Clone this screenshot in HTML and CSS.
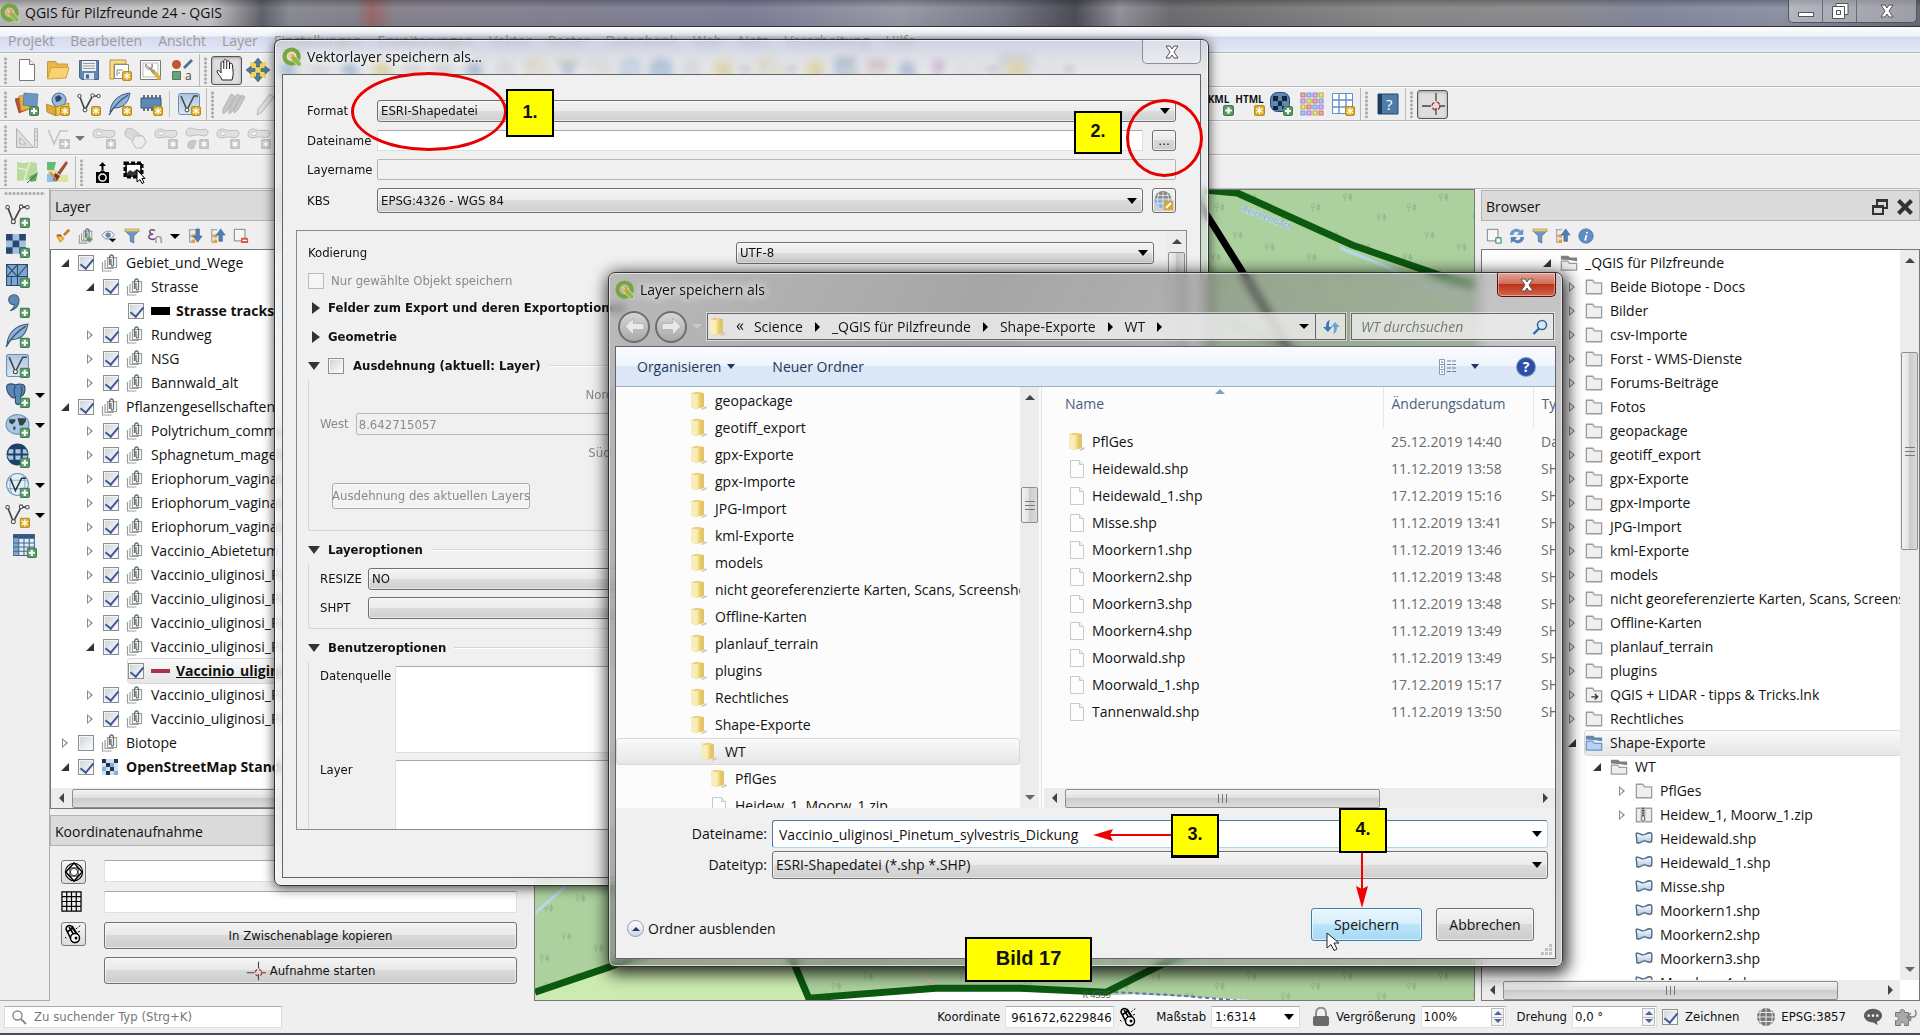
FILE: index.html
```html
<!DOCTYPE html>
<html lang="de">
<head>
  <meta charset="UTF-8">
  <meta name="viewport" content="width=device-width, initial-scale=1.0">
  <title>QGIS für Pilzfreunde 24 - QGIS</title>
  <link rel="stylesheet" href="styles.css">
</head>
<body>

  <!-- icon sprite -->
  <svg class="sprite" aria-hidden="true">
    <defs>
      <linearGradient id="g-fold" x1="0" x2="1"><stop offset="0" stop-color="#fdf3bb"/><stop offset="1" stop-color="#e6c55c"/></linearGradient>
      <linearGradient id="g-shp" x1="0" y1="0" x2="0" y2="1"><stop offset="0" stop-color="#fff"/><stop offset="1" stop-color="#a9c4e2"/></linearGradient>
      <linearGradient id="g-box" x1="0" y1="0" x2="0" y2="1"><stop offset="0" stop-color="#a9c6e4"/><stop offset="1" stop-color="#dce6f0"/></linearGradient>
    </defs>
    <symbol id="plus" viewBox="0 0 10 10"><rect x=".5" y=".5" width="9" height="9" rx="1.5" fill="#5a9b6a" stroke="#3f7d50"/><path d="M5 2v6M2 5h6" stroke="#fff" stroke-width="2"/></symbol>
    <symbol id="star" viewBox="0 0 10 10"><rect x=".5" y=".5" width="9" height="9" rx="1.5" fill="#dcae2c" stroke="#b98e18"/><path d="M5 1.500v7M2 3.200l6 3.600M8 3.200l-6 3.600" stroke="#fff" stroke-width="1.200"/></symbol>
    <symbol id="gbadge" viewBox="0 0 10 10"><rect width="10" height="10" rx="1.500" fill="#c2c2c2"/><path d="M5 1.500v7M2 3.200l6 3.600M8 3.200l-6 3.600" stroke="#fff" stroke-width="1.200"/></symbol>

    <symbol id="logo" viewBox="0 0 24 24"><circle cx="11.500" cy="11.500" r="8.500" fill="none" stroke="#79a63c" stroke-width="5"/><path d="M11 11h5l7 8v4h-4l-8-8z" fill="#8fb94f" stroke="#e9f2dc" stroke-width=".8"/><path d="M8 8l6 1 1 5-5-1z" fill="#f08a2c"/><path d="M8 8l3 .5 2 3-3 1z" fill="#f6d34a"/></symbol>
    <symbol id="new" viewBox="0 0 24 24"><path d="M4.500 1.500h10l5 5v16h-15z" fill="#fff" stroke="#777"/><path d="M14.500 1.500v5h5" fill="#eee" stroke="#777"/></symbol>
    <symbol id="open" viewBox="0 0 24 24"><path d="M1.500 20V3.500h8l2 2.500h10v4" fill="#e8b64c" stroke="#c8963a"/><path d="M1.500 21L5 9.500h18L20 20z" fill="#f9d371" stroke="#d4a53f"/></symbol>
    <symbol id="save" viewBox="0 0 24 24"><path d="M2.500 2.500h19v19h-17l-2-2z" fill="#5f86ad" stroke="#41668c"/><path d="M5 3h14v10H5z" fill="#f1f1f1"/><path d="M6 5.500h12M6 8h12M6 10.500h12" stroke="#9a9a9a"/><path d="M7 15h10v6.500H7z" fill="#dfe6ed"/><path d="M9 16.500h3v4H9z" fill="#41668c"/></symbol>
    <symbol id="layout" viewBox="0 0 24 24"><path d="M2 2h16v4H6v15H2z" fill="#f6dd8a" stroke="#b59334"/><path d="M6.500 6.500h14v14h-14z" fill="#fff" stroke="#888"/><path d="M9 18v-6h6M11 16v-2" stroke="#888" fill="none"/><use href="#star" x="14" y="13" width="10" height="10"/></symbol>
    <symbol id="layoutmgr" viewBox="0 0 24 24"><path d="M1.500 2.500h20v19h-20z" fill="#fff" stroke="#777"/><path d="M4 5h15v14H4z" fill="none" stroke="#bbb"/><path d="M13 12l8 9" stroke="#dfb23c" stroke-width="4"/><path d="M7 6a3.500 3.500 0 1 0 6 0v4h-2l-2-1z" fill="#e4e4e4" stroke="#888"/><path d="M11 10l4 5" stroke="#999" stroke-width="2.500"/></symbol>
    <symbol id="style" viewBox="0 0 24 24"><circle cx="6.500" cy="6.500" r="4.500" fill="#c4542e"/><path d="M14 10l8-8" stroke="#4b7194" stroke-width="2.800"/><path d="M2.500 13.500h8v8h-8z" fill="#69a27c" stroke="#4b7d5c"/><text x="15" y="22" font-family="Open Sans" font-size="12" fill="#444">a</text></symbol>
    <symbol id="hand" viewBox="0 0 24 24"><path d="M7 22c-1-4-5-6-5-9 1-1.500 3 0 4 2V5c0-2 2.500-2 2.800 0V3c0-2 2.700-2 2.900 0v1c.3-2 2.800-1.500 2.800.3V6c.5-1.500 2.800-1 2.800.6C18 13 19 16 17 22z" fill="#fff" stroke="#222"/><path d="M8.800 5v6M11.700 4v7M14.500 5v6" stroke="#222"/></symbol>
    <symbol id="pan" viewBox="0 0 24 24"><path d="M4 4h16v16H4z" fill="#f3d75c"/><path d="M12 0l4 5h-2.500v4h-3V5H8zM12 24l-4-5h2.500v-4h3v4H16zM0 12l5-4v2.500h4v3H5V16zM24 12l-5 4v-2.500h-4v-3h4V8z" fill="#50799f" stroke="#39587a" stroke-width=".6"/></symbol>
    <symbol id="zoomb" viewBox="0 0 24 24"><circle cx="11" cy="12" r="8" fill="#5b84b0"/><path d="M15 17l7 5" stroke="#8a8a8a" stroke-width="3"/></symbol>
    <symbol id="zoomg" viewBox="0 0 24 24"><circle cx="11" cy="12" r="7" fill="#dadada" stroke="#9a9a9a" stroke-width="2"/><path d="M15 17l6 5" stroke="#9a9a9a" stroke-width="3"/></symbol>
    <symbol id="selecty" viewBox="0 0 24 24"><path d="M3 4h18v16H3z" fill="#e6c94a"/><path d="M12 8l8 12" stroke="#999" stroke-width="3"/></symbol>
    <symbol id="redtab" viewBox="0 0 24 24"><path d="M3 4h18v16H3z" fill="#e8e8e8" stroke="#a7a7a7" stroke-width="2"/><path d="M3 4h18v6H3z" fill="#c96a60"/><path d="M3 16h18v4H3z" fill="#9ac29d"/></symbol>
    <symbol id="sigma" viewBox="0 0 24 24"><path d="M5 4h14l-6 8v8h-4v-8z" fill="#9b3fa0"/></symbol>

    <symbol id="datasrc" viewBox="0 0 24 24"><path d="M0 7l10-3 4 13-10 4z" fill="#b5532e" stroke="#8a3b1c" stroke-width=".6"/><path d="M4 4l11-2 2 14-11 3z" fill="#e6b23e" stroke="#b7872a" stroke-width=".6"/><path d="M9 1l14 1-1 13-14-2z" fill="#6d96c4" stroke="#466c98" stroke-width=".6"/><use href="#plus" x="14" y="14" width="10" height="10"/></symbol>
    <symbol id="gpkg" viewBox="0 0 24 24"><circle cx="13" cy="8" r="7" fill="#9bbbdb" stroke="#41668c"/><path d="M9 5l4-2 3 3-2 3-4 1z" fill="#2c4a6c"/><path d="M0 12l10 3v9L1 20z" fill="#dda931" stroke="#8c6b18" stroke-width=".6"/><path d="M10 15l13-4-1 9-12 4z" fill="#f1c84b" stroke="#8c6b18" stroke-width=".6"/><use href="#star" x="14" y="14" width="10" height="10"/></symbol>
    <symbol id="vec" viewBox="0 0 24 24"><path d="M2.500 4l5.500 14L15.500 4h6" fill="none" stroke="#444" stroke-width="1.600"/><g fill="#fff" stroke="#444"><circle cx="2.500" cy="4" r="1.700"/><circle cx="8" cy="18" r="1.900"/><circle cx="15.500" cy="3.500" r="1.700"/><circle cx="21.500" cy="4" r="1.700"/></g></symbol>
    <symbol id="vec-add" viewBox="0 0 24 24"><use href="#vec"/><use href="#plus" x="14" y="14" width="10" height="10"/></symbol>
    <symbol id="vec-new" viewBox="0 0 24 24"><use href="#vec"/><use href="#star" x="14" y="14" width="10" height="10"/></symbol>
    <symbol id="feather" viewBox="0 0 24 24"><path d="M2 20C3 10 10 2 22 1c-1 6-3 12-10 14-3 1-5 1-6 1z" fill="#8fb4d8" stroke="#39587a"/><path d="M1 23C6 14 12 8 20 3" fill="none" stroke="#39587a" stroke-width="1.400"/></symbol>
    <symbol id="feather-add" viewBox="0 0 24 24"><use href="#feather"/><use href="#plus" x="14" y="14" width="10" height="10"/></symbol>
    <symbol id="feather-new" viewBox="0 0 24 24"><use href="#feather"/><use href="#star" x="14" y="14" width="10" height="10"/></symbol>
    <symbol id="chip" viewBox="0 0 24 24"><path d="M5 3v16M9 3v16M13 3v16M17 3v16M21 3v16" stroke="#444" stroke-width="1.500"/><path d="M2 6h20v10H2z" fill="#5d88b5" stroke="#39587a"/><use href="#star" x="14" y="14" width="10" height="10"/></symbol>
    <symbol id="virt" viewBox="0 0 24 24"><rect x="1.500" y="1.500" width="21" height="21" rx="2" fill="url(#g-box)" stroke="#6e8eb0"/><path d="M4 4l6 14 7-14h4" fill="none" stroke="#444" stroke-width="1.500"/><circle cx="10" cy="18" r="1.900" fill="#fff" stroke="#444"/></symbol>
    <symbol id="virt-new" viewBox="0 0 24 24"><use href="#virt"/><use href="#star" x="14" y="14" width="10" height="10"/></symbol>
    <symbol id="virt-add" viewBox="0 0 24 24"><use href="#virt"/><use href="#plus" x="14" y="14" width="10" height="10"/></symbol>
    <symbol id="pencils" viewBox="0 0 24 24"><path d="M9 2l4 2-8 15-4 3v-5zM15 2l4 2-8 15-4 3v-5zM20 3l3 2-7 13-4 3v-4z" fill="#c6c6c6" stroke="#aeaeae" stroke-width=".8"/></symbol>
    <symbol id="pencil" viewBox="0 0 24 24"><path d="M17 2l4 3L9 20l-5 3 1-6z" fill="#dedede" stroke="#b5b5b5"/></symbol>
    <symbol id="ruler" viewBox="0 0 24 24"><path d="M1.500 2.500v19h17zM5 12l6 6H5z" fill="#dedede" stroke="#b0b0b0"/><path d="M19.500 2.500h3v19h-3zM20 6h2M20 10h2M20 14h2" fill="#e4e4e4" stroke="#b8b8b8"/></symbol>
    <symbol id="vtx" viewBox="0 0 24 24"><path d="M2.500 4l5.500 14L14 5h8" fill="none" stroke="#c2c2c2" stroke-width="1.600"/><path d="M13 13h11v10H13z" fill="#c6c6c6"/><path d="M15 18h6m-2.500-3l3 3-3 3" stroke="#fff" fill="none" stroke-width="1.600"/></symbol>
    <symbol id="blob" viewBox="0 0 24 24"><path d="M1 8c0-5 5-6 9-4s13-2 13 3-5 5-9 4-13 4-13-3z" fill="#e0e0e0" stroke="#bdbdbd"/><ellipse cx="7" cy="7.500" rx="3" ry="2" fill="#f5f5f5" stroke="#c6c6c6"/><use href="#gbadge" x="14" y="13" width="10" height="10"/></symbol>
    <symbol id="blob2" viewBox="0 0 24 24"><path d="M2 7c0-5 6-6 9-3s11 7 11 13c-6 8-11-2-15-4s-5-3-5-6z" fill="#dadada" stroke="#bdbdbd"/><path d="M12 10h8l3 6-4 6h-6l-4-6z" fill="#ececec" stroke="#bdbdbd"/></symbol>
    <symbol id="blob3" viewBox="0 0 24 24"><path d="M1 7c0-5 5-6 9-4s13-2 13 3-5 4-9 3-13 4-13-2z" fill="#e0e0e0" stroke="#bdbdbd"/><path d="M2 19c1-6 8-6 10-4l-3 8c-3 1-7 0-7-4z" fill="#c8c8c8"/><use href="#gbadge" x="14" y="13" width="10" height="10"/></symbol>
    <symbol id="osm" viewBox="0 0 24 24"><path d="M2 2l7 1 7-1 6 1v8l-1 10-8-1-11 1V11z" fill="#b9dba0"/><path d="M3 8l9 2 3-8M12 10l-3 12" stroke="#e7efd0" stroke-width="1.500" fill="none"/><path d="M14 17l9-5-2 9-5 1z" fill="#6aa85e"/><path d="M12 23l9-8" stroke="#2e6b2e"/></symbol>
    <symbol id="osm2" viewBox="0 0 24 24"><path d="M1 2h9l-2 8H1z" fill="#5fbf7a"/><path d="M2 10h9v5H2z" fill="#e9d9a0"/><path d="M1 14h11v8H1z" fill="#8ec0e8"/><path d="M10 15h12v7H10z" fill="#e2dfa0"/><path d="M20 1l2 2-8 12-3-2z" fill="#a35136"/><path d="M9 13l5 3-3 5-4-1z" fill="#6a3a26"/><path d="M4 12l6 8" stroke="#e08a3c" stroke-width="2"/></symbol>
    <symbol id="camera" viewBox="0 0 24 24"><path d="M11.500 2L15 6h-2.500v4h-2V6H8z" fill="#000"/><path d="M5 12h4l1-1.500h3l1 1.500h4v11H5z" fill="#000"/><circle cx="11.500" cy="17.500" r="3.600" fill="none" stroke="#fff" stroke-width="1.500"/></symbol>
    <symbol id="snap" viewBox="0 0 24 24"><path d="M3 3h17v14H3z" fill="#333" stroke="#000" stroke-width="3" stroke-dasharray="4 2"/><path d="M5 5h13v6l-3-2-4 3-3-2-3 3z" fill="#fff"/><path d="M15 10v12l3-2.500 2 4 2-1-2-4h3z" fill="#fff" stroke="#000"/></symbol>
    <symbol id="rast-add" viewBox="0 0 24 24"><path d="M1 1h19v19H1z" fill="#9fc0df"/><path d="M1 1h6.300v6.300H1zM13.700 1H20v6.300h-6.300zM7.300 7.300h6.400v6.400H7.300zM1 13.700h6.300V20H1zM13.700 13.700H20V20h-6.300z" fill="#27486c"/><use href="#plus" x="14" y="14" width="10" height="10"/></symbol>
    <symbol id="rast" viewBox="0 0 18 18"><path d="M1 1h16v16H1z" fill="#cfe0f3"/><path d="M1 1h4v4H1zM13 1h4v4h-4zM5 5h4v4H5zM9 9h4v4H9zM5 13h4v4H5z" fill="#24354b"/><path d="M9 5h4v4H9zM1 9h4v4H1zM13 13h4v4h-4z" fill="#89aed8"/></symbol>
    <symbol id="mesh-add" viewBox="0 0 24 24"><path d="M1.500 1.500h20v20h-20z" fill="#7fa6cf" stroke="#27486c"/><path d="M1.500 13h20M12 1.500v20M1.500 1.500L12 13M12 1.500L1.500 13M21.500 1.500L12 13M6 13v9" stroke="#27486c" fill="none"/><use href="#plus" x="14" y="14" width="10" height="10"/></symbol>
    <symbol id="comma-add" viewBox="0 0 24 24"><path d="M5 3c5-3 10 0 8 7-1 4-4 6-8 7 3-2 4-4 4-6-5 1-7-5-4-8z" fill="#5d88b5" stroke="#39587a"/><use href="#plus" x="14" y="14" width="10" height="10"/></symbol>
    <symbol id="pg-add" viewBox="0 0 24 24"><path d="M2 2c3-2 6-1 8 0 4-2 9-1 9 2 1 5-2 9-4 9v5c0 4-5 3-5 0v-4c-2 1-4 0-5-2-3-2-4-8-3-10z" fill="#5d88b5" stroke="#27486c"/><path d="M10 3c-2 3-1 8 0 11M15 3c2 3 1 7 0 9" stroke="#27486c" fill="none"/><use href="#plus" x="14" y="14" width="10" height="10"/></symbol>
    <symbol id="dots-add" viewBox="0 0 24 24"><ellipse cx="12" cy="11" rx="11" ry="9.500" fill="#a9c6e6" stroke="#6b93bd"/><path d="M4 6h6v2l-3 3-3-2zM12 5h8v3l-3 4h-3zM8 13h2v3H8z" fill="#344"/><use href="#plus" x="14" y="14" width="10" height="10"/></symbol>
    <symbol id="globe-add" viewBox="0 0 24 24"><circle cx="12" cy="11" r="10.500" fill="#1e3f66"/><path d="M4 6h4v4H3zM10 6h5v4h-5zM17 6h3l2 4h-5zM2 12h6v4H4zM10 12h5v4h-5zM17 12h5l-2 4h-3z" fill="#a9c6e6"/><use href="#plus" x="14" y="14" width="10" height="10"/></symbol>
    <symbol id="wfs-add" viewBox="0 0 24 24"><circle cx="12" cy="11" r="10.500" fill="#e4eef9" stroke="#6b93bd"/><path d="M2 7h20M2 15h20M7 1c-3 6-3 14 0 20M17 1c3 6 3 14 0 20" stroke="#8fb2d6" fill="none"/><path d="M5 5l5 12 6-12h4" fill="none" stroke="#333" stroke-width="1.500"/><use href="#plus" x="14" y="14" width="10" height="10"/></symbol>
    <symbol id="table-add" viewBox="0 0 24 24"><path d="M1.500 1.500h20v20h-20z" fill="#e4eef9" stroke="#41668c"/><path d="M1.500 1.500h20v4h-20z" fill="#2f557f"/><path d="M1.500 5h5v16h-5z" fill="#7fa6cf"/><path d="M6.500 2v20M11.500 2v20M16.500 2v20M1.500 9.500h20M1.500 13.500h20M1.500 17.500h20" stroke="#41668c"/><use href="#plus" x="14" y="14" width="10" height="10"/></symbol>
    <symbol id="rastglobe" viewBox="0 0 24 24"><rect x="1.500" y=".5" width="19" height="19" rx="7" fill="#5d88b5" stroke="#27486c"/><path d="M4 4h5v5H4zM13 4h5v5h-5zM9 9h4v5H9zM4 14h5v4H4zM13 14h5v3h-5z" fill="#16263a"/><use href="#plus" x="14" y="14" width="10" height="10"/></symbol>
    <symbol id="colgrid" viewBox="0 0 24 24"><g stroke-width="1.200"><path d="M1 1h4v4H1zM13 7h4v4h-4zM7 13h4v4H7zM19 19h4v4h-4z" fill="#e3b0b0" stroke="#c77"/><path d="M7 1h4v4H7zM19 7h4v4h-4zM13 13h4v4h-4zM1 19h4v4H1z" fill="#b0c7ee" stroke="#77a0dd"/><path d="M13 1h4v4h-4zM1 7h4v4H1zM19 13h4v4h-4zM7 19h4v4H7z" fill="#d5b8ea" stroke="#a77fd0"/><path d="M19 1h4v4h-4zM7 7h4v4H7zM1 13h4v4H1zM13 19h4v4h-4z" fill="#f2e2a0" stroke="#c2a93c"/></g></symbol>
    <symbol id="bluegrid" viewBox="0 0 24 24"><path d="M1.500 1.500h20v20h-20z" fill="#fff" stroke="#5f92cc"/><path d="M8 2v20M15 2v20M2 8h20M2 15h20" stroke="#5f92cc" stroke-width="1.400"/><use href="#star" x="14" y="14" width="10" height="10"/></symbol>
    <symbol id="help" viewBox="0 0 24 24"><path d="M2 2h20v20H2z" fill="#4f7ba8" stroke="#27486c"/><path d="M2 2h4v20H2z" fill="#1f3c5c"/><text x="10" y="18" font-family="Open Sans" font-size="15" fill="#fff">?</text></symbol>
    <symbol id="cross" viewBox="0 0 24 24"><path d="M15 1v8M15 16v7M1 14h9M18 14h6" stroke="#444" stroke-width="1.300"/><circle cx="15" cy="14" r="4" fill="none" stroke="#b33" stroke-width="1.500" stroke-dasharray="4 2.300"/></symbol>
    <symbol id="brush" viewBox="0 0 18 18"><path d="M10 8l6-6" stroke="#c57a2c" stroke-width="3"/><path d="M2 9l4-2 4 5-4 4z" fill="#f2c14c" stroke="#b98e18"/><path d="M2 8l5 1" stroke="#c44" stroke-width="2"/></symbol>
    <symbol id="clip" viewBox="0 0 18 18"><path d="M6.500 3.500h9v10h-9zM1.500 8v9h9M4 6v8.500h9" fill="none" stroke="#9a9f9a" stroke-width="1.200"/><path d="M8.500 11V4c0-4 4-4 4 0v6c0 3-2.500 2.500-2.500 0V5" fill="none" stroke="#66727c" stroke-width="1.300"/></symbol>
    <symbol id="clip-add" viewBox="0 0 18 18"><use href="#clip"/><path d="M13 10v6M10 13h6" stroke="#4f9a48" stroke-width="2"/></symbol>
    <symbol id="eye" viewBox="0 0 18 18"><path d="M1 8c4-6 11-6 14 0-4 6-11 6-14 0z" fill="#eef2f6" stroke="#7d8891"/><circle cx="8" cy="8" r="3" fill="#5d88b5"/><path d="M9 12h8l-4 4z" fill="#000"/></symbol>
    <symbol id="funnel" viewBox="0 0 18 18"><path d="M1 3h16l-6 6v8l-4-2V9z" fill="#6c98c8" stroke="#41668c" stroke-width=".8"/><path d="M1 1h16v3H1z" fill="#e2c878" stroke="#b59a4a" stroke-width=".6"/></symbol>
    <symbol id="eps" viewBox="0 0 18 18"><path d="M9 3C6 1 3 2 3 4s2 3 4 3C4 7 2 8 2 10s4 4 7 2" fill="none" stroke="#7a4a86" stroke-width="1.800"/><path d="M10 17v-5c0-3 6-3 6 0v5" fill="none" stroke="#aaa" stroke-width="2"/></symbol>
    <symbol id="expand" viewBox="0 0 18 18"><path d="M2 2h7M3 2v14h4M3 9h4" stroke="#888" fill="none"/><path d="M5 7h4v4H5zM5 13h4v4H5z" fill="#e6a13c"/><path d="M10 1h4v8h3l-5 7-5-7h3z" fill="#4f7fb5" stroke="#2f557f" stroke-width=".6"/></symbol>
    <symbol id="collapse" viewBox="0 0 18 18"><path d="M1 2h7M2 2v14h4M2 9h4" stroke="#888" fill="none"/><path d="M4 7h4v4H4zM4 13h4v4H4z" fill="#e6a13c"/><path d="M10 15h4V8h3l-5-7-5 7h3z" fill="#4f7fb5" stroke="#2f557f" stroke-width=".6"/></symbol>
    <symbol id="remove" viewBox="0 0 18 18"><path d="M1.500 1.500h12v13h-12z" fill="#f6f6f6" stroke="#777"/><rect x="9" y="11" width="8" height="6" rx="1" fill="#d9534f"/><path d="M10.500 14h5" stroke="#fff" stroke-width="1.500"/></symbol>
    <symbol id="addlay" viewBox="0 0 18 18"><path d="M1.500 1.500h12v13h-12z" fill="#f6f6f6" stroke="#777"/><rect x="11" y="11" width="6" height="6" rx="1" fill="#fff" stroke="#4f9a68" stroke-width="1.500"/></symbol>
    <symbol id="refresh" viewBox="0 0 18 18"><path d="M1 8c0-7 9-9 12-5l3-2v7H9l2-3c-3-2-6 0-6 3z" fill="#6c98d0"/><path d="M17 10c0 7-9 9-12 5l-3 2v-7h7l-2 3c3 2 6 0 6-3z" fill="#5585c0"/></symbol>
    <symbol id="info" viewBox="0 0 18 18"><circle cx="9" cy="9" r="8" fill="#5f8fc6" stroke="#47729f"/><path d="M10 4.500v1.800M9.500 8l-1.500 6" stroke="#fff" stroke-width="2"/></symbol>
    <symbol id="fold" viewBox="0 0 20 18"><path d="M1.500 16.500v-15h7l2 3h8v12z" fill="#efefef" stroke="#9c9c9c" stroke-width="1.400"/></symbol>
    <symbol id="fold-open" viewBox="0 0 20 18"><path d="M1 5V1h8l2 2h8v4l-7-1z" fill="#7f7f7f"/><path d="M1.500 17V7h7l2 2.500h8V17z" fill="#efefef" stroke="#9c9c9c" stroke-width="1.400"/></symbol>
    <symbol id="fold-sel" viewBox="0 0 20 18"><path d="M1 5V1h8l2 2h8v4l-7-1z" fill="#6488ae"/><path d="M1.500 17V7h7l2 2.500h8V17z" fill="#b5d3f5" stroke="#6f94bd" stroke-width="1.400"/></symbol>
    <symbol id="fold-link" viewBox="0 0 20 18"><use href="#fold"/><path d="M7 11h7m-3-3l3 3-3 3" fill="none" stroke="#333" stroke-width="1.500"/></symbol>
    <symbol id="zip" viewBox="0 0 20 18"><path d="M1.500 1.500h17v15h-17z" fill="#ededed" stroke="#9c9c9c" stroke-width="1.400"/><path d="M6 1h6v16H6z" fill="#c9c9c9"/><path d="M9 1v9" stroke="#555" stroke-width="3" stroke-dasharray="1.500 1"/><rect x="7.500" y="10" width="3" height="6" rx="1.500" fill="#fff" stroke="#555"/></symbol>
    <symbol id="shp" viewBox="0 0 20 18"><path d="M1.500 2.500C6 2 7 6 11 4s6-3 7.500-1c1 4-.5 6 0 9-4 2-5-1-8-1s-5 4-8.500 2C3 9 .5 6 1.500 2.500z" fill="url(#g-shp)" stroke="#4a6684" stroke-width="1.500"/></symbol>
    <symbol id="wfold" viewBox="0 0 18 20"><path d="M1 2l6-1 7 1v14l-8 2-5-2z" fill="#e3c46a"/><path d="M1 2l5 1v15l-5-2z" fill="#f7edbd"/><path d="M6 3l5-2v15l-5 2z" fill="url(#g-fold)"/><path d="M11 18l5-3 1 2-5 2z" fill="#cfc9b4"/></symbol>
    <symbol id="file" viewBox="0 0 18 20"><path d="M2.500 1.500h9l4 4v13h-13z" fill="#fdfdfd" stroke="#c9c9c9"/><path d="M11.500 1.500v4h4" fill="#eee" stroke="#c9c9c9"/></symbol>
    <symbol id="globe-wire" viewBox="0 0 20 20"><circle cx="10" cy="10" r="9" fill="#777"/><path d="M1 10h18M2.500 5.500h15M2.500 14.500h15M10 1v18M6 1.500c-3 5-3 12 0 17M14 1.500c3 5 3 12 0 17" stroke="#e6e6e6" fill="none"/></symbol>
    <symbol id="globe-edit" viewBox="0 0 20 20"><circle cx="9" cy="9" r="8.500" fill="#8fb2d6"/><path d="M1 8a8 8 0 0 1 16 0z" fill="#888"/><path d="M1 8h16M3 4.500h12M2 12.500h14M9 1v16M5 2c-2 5-2 10 0 14M13 2c2 5 2 10 0 14" stroke="#eee" fill="none" stroke-width=".8"/><path d="M10 10h9v9h-9z" fill="#d6a92c"/><path d="M12 17l5-5" stroke="#fff" stroke-width="1.800"/></symbol>
    <symbol id="crs" viewBox="0 0 22 22"><circle cx="11" cy="11" r="9.500" fill="none" stroke="#000" stroke-width="1.200"/><path d="M11 1l9 10-9 10-9-10z" fill="#fff" stroke="#000" stroke-width="1.600"/><path d="M6.500 6.500h9v9h-9z" fill="none" stroke="#000"/><circle cx="11" cy="11" r="4" fill="none" stroke="#333"/></symbol>
    <symbol id="gridb" viewBox="0 0 22 22"><path d="M1 1h20v20H1zM6 1v20M11 1v20M16 1v20M1 6h20M1 11h20M1 16h20" fill="none" stroke="#000" stroke-width="1.300"/></symbol>
    <symbol id="mouse" viewBox="0 0 20 20"><path d="M2 5c0-3 4-5 6-2l6 9c3 5-3 8-6 5z" fill="#fff" stroke="#000" stroke-width="1.600"/><path d="M5 3l5 8M9 4l-6 4M8 2l5 8" stroke="#000" stroke-width="1.600"/><circle cx="11" cy="14" r="4.500" fill="#fff" stroke="#000" stroke-width="1.500"/><circle cx="12" cy="14" r="1.500"/><path d="M12 5l5-4M1 13l2 2M14 8l3-1" stroke="#000" stroke-dasharray="2 1.500"/></symbol>
    <symbol id="lock" viewBox="0 0 18 20"><path d="M4 10V6c0-7 10-7 10 0v4" fill="none" stroke="#8f8f8f" stroke-width="2"/><rect x="1" y="9" width="16" height="10" rx="2" fill="#6a6a6a"/></symbol>
    <symbol id="bubble" viewBox="0 0 22 20"><ellipse cx="11" cy="8.500" rx="10" ry="7.500" fill="#5c5c5c"/><path d="M9 14h6l1 5z" fill="#5c5c5c"/><path d="M5 8.500h2.500M9.700 8.500h2.600M14.500 8.500H17" stroke="#fff" stroke-width="2.500"/></symbol>
    <symbol id="puzzle" viewBox="0 0 24 20"><path d="M1.500 5.500h5c-2-4 5-4 4 0h4v4c3-2 4 4 0 4v5h-4c1-4-5-4-4 0h-5v-5c4 1 4-5 0-4z" fill="#a9a9a9" stroke="#777"/><path d="M14 10h5c3 0 4-4 2-7M17 6l-4 4 4 4" fill="none" stroke="#888" stroke-width="1.500"/></symbol>
    <symbol id="lens" viewBox="0 0 16 16"><circle cx="6.500" cy="6.500" r="4.500" fill="none" stroke="#888" stroke-width="1.400"/><path d="M10 10l5 5" stroke="#888" stroke-width="2"/></symbol>
    <symbol id="lens-b" viewBox="0 0 16 16"><circle cx="10" cy="6" r="4.500" fill="none" stroke="#2d6db0" stroke-width="1.600"/><path d="M7 9.500L1.500 15" stroke="#2d6db0" stroke-width="2.400"/></symbol>
    <symbol id="views" viewBox="0 0 20 18"><path d="M1.500 1.500h5v15h-5zM1 6.500h6M1 11.500h6" fill="#fff" stroke="#8a9bae"/><path d="M3 4h2M3 9h2M3 14h2" stroke="#4b7194"/><path d="M9 3h10M9 6.500h10M9 10h10M9 13.500h10" stroke="#6c7f94" stroke-dasharray="4 1"/></symbol>
    <symbol id="swap" viewBox="0 0 18 16"><path d="M8 1C4 2 4 6 4 8H1l5 5 4-5H7c0-3 0-5 1-7z" fill="#3c77bb"/><path d="M11 15c4-1 4-5 4-7h3l-5-5-4 5h3c0 3 0 5-1 7z" fill="#6fa3d8"/></symbol>
    <symbol id="xglyph" viewBox="0 0 16 16"><path d="M2 2h4l2 3 2-3h4l-4 6 4 6h-4l-2-3-2 3H2l4-6z" fill="#fff" stroke="#555"/></symbol>
    <symbol id="tree" viewBox="0 0 12 12"><circle cx="3" cy="4" r="2" fill="none" stroke="#8fb583"/><path d="M3 6v4M9 10V2M9 2L7 7h4z" fill="none" stroke="#8fb583"/></symbol>
  </svg>

  <header class="titlebar">
    <svg class="ico20"><use href="#logo"/></svg>
    <span>QGIS für Pilzfreunde 24 - QGIS</span>
    <div class="winbtns">
      <button type="button" aria-label="Minimieren"><svg width="18" height="14" viewBox="0 0 18 14"><rect x="1.500" y="8.500" width="15" height="4" fill="#fff" stroke="#555"/></svg></button>
      <button type="button" aria-label="Wiederherstellen"><svg width="18" height="18" viewBox="0 0 18 18"><path d="M5 1.500h12v11H5z" fill="#fff" stroke="#555"/><path d="M1.500 4.500h12v12h-12zM5.500 8.500h4v4h-4z" fill="#fff" fill-rule="evenodd" stroke="#555"/></svg></button>
      <button type="button" class="wide" aria-label="Schließen"><svg width="16" height="16"><use href="#xglyph"/></svg></button>
    </div>
  </header>

  <nav class="menubar">
    <span>Projekt</span><span>Bearbeiten</span><span>Ansicht</span><span>Layer</span><span>Einstellungen</span><span>Erweiterungen</span><span>Vektor</span><span>Raster</span><span>Datenbank</span><span>Web</span><span>Netz</span><span>Verarbeitung</span><span>Hilfe</span>
  </nav>

  <div class="toolbar">
    <div class="group">
      <i class="grip"></i>
      <button type="button"><svg><use href="#new"/></svg></button>
      <button type="button"><svg><use href="#open"/></svg></button>
      <button type="button"><svg><use href="#save"/></svg></button>
      <button type="button"><svg><use href="#layout"/></svg></button>
      <button type="button"><svg><use href="#layoutmgr"/></svg></button>
      <button type="button"><svg><use href="#style"/></svg></button>
    </div>
    <div class="group last">
      <i class="grip"></i>
      <button type="button" class="pressed"><svg><use href="#hand"/></svg></button>
      <button type="button"><svg><use href="#pan"/></svg></button>
      <button type="button"><svg><use href="#zoomb"/></svg></button>
      <button type="button"><svg><use href="#zoomg"/></svg></button>
      <button type="button"><svg><use href="#zoomb"/></svg></button>
      <button type="button"><svg><use href="#selecty"/></svg></button>
      <button type="button"><svg><use href="#zoomg"/></svg></button>
      <button type="button"><svg><use href="#zoomg"/></svg></button>
      <button type="button"><svg><use href="#zoomb"/></svg></button>
      <button type="button"><svg><use href="#zoomg"/></svg></button>
      <button type="button"><svg><use href="#layout"/></svg></button>
      <button type="button"><svg><use href="#funnel"/></svg></button>
      <button type="button"><svg><use href="#layoutmgr"/></svg></button>
      <button type="button"><svg><use href="#refresh"/></svg></button>
      <button type="button"><svg><use href="#info"/></svg></button>
      <button type="button"><svg><use href="#zoomg"/></svg></button>
      <button type="button"><svg><use href="#selecty"/></svg></button>
      <i class="dd"></i>
      <button type="button"><svg><use href="#layout"/></svg></button>
      <i class="dd"></i>
      <button type="button"><svg><use href="#selecty"/></svg></button>
      <button type="button"><svg><use href="#table-add"/></svg></button>
      <button type="button"><svg><use href="#redtab"/></svg></button>
      <button type="button"><svg><use href="#zoomb"/></svg></button>
      <button type="button"><svg><use href="#sigma"/></svg></button>
      <button type="button"><svg><use href="#ruler"/></svg></button>
      <i class="dd"></i>
      <button type="button" class="pressed"><svg><use href="#selecty"/></svg></button>
      <button type="button"><svg><use href="#vtx"/></svg></button>
      <i class="dd"></i>
    </div>
  </div>

  <div class="toolbar">
    <div class="group">
      <i class="grip"></i>
      <button type="button"><svg><use href="#datasrc"/></svg></button>
      <button type="button"><svg><use href="#gpkg"/></svg></button>
      <button type="button"><svg><use href="#vec-new"/></svg></button>
      <button type="button"><svg><use href="#feather-new"/></svg></button>
      <button type="button"><svg><use href="#chip"/></svg></button>
      <i class="vsep"></i>
      <button type="button"><svg><use href="#virt-new"/></svg></button>
    </div>
    <div class="group">
      <i class="grip"></i>
      <button type="button"><svg><use href="#pencils"/></svg></button>
      <button type="button"><svg><use href="#pencil"/></svg></button>
      <span class="filler"></span>
      <button type="button" class="word"><b>KML</b><svg><use href="#plus"/></svg></button>
      <button type="button" class="word"><b>HTML</b><svg><use href="#star"/></svg></button>
      <button type="button"><svg><use href="#rastglobe"/></svg></button>
      <button type="button"><svg><use href="#colgrid"/></svg></button>
      <button type="button"><svg><use href="#bluegrid"/></svg></button>
    </div>
    <div class="group">
      <i class="grip"></i>
      <button type="button"><svg><use href="#help"/></svg></button>
    </div>
    <div class="group last">
      <i class="grip"></i>
      <button type="button" class="pressed"><svg><use href="#cross"/></svg></button>
    </div>
  </div>

  <div class="toolbar">
    <div class="group last">
      <i class="grip"></i>
      <button type="button"><svg><use href="#ruler"/></svg></button>
      <button type="button"><svg><use href="#vtx"/></svg></button>
      <i class="dd gray"></i>
      <button type="button"><svg><use href="#blob"/></svg></button>
      <button type="button"><svg><use href="#blob2"/></svg></button>
      <button type="button"><svg><use href="#blob"/></svg></button>
      <button type="button"><svg><use href="#blob3"/></svg></button>
      <button type="button"><svg><use href="#blob"/></svg></button>
      <button type="button"><svg><use href="#blob"/></svg></button>
    </div>
  </div>

  <div class="toolbar">
    <div class="group">
      <i class="grip"></i>
      <button type="button"><svg><use href="#osm"/></svg></button>
      <button type="button"><svg><use href="#osm2"/></svg></button>
    </div>
    <div class="group last">
      <i class="grip"></i>
      <button type="button"><svg><use href="#camera"/></svg></button>
      <button type="button"><svg><use href="#snap"/></svg></button>
    </div>
  </div>

  <main class="workspace">

    <aside class="sidebar">
      <i class="hgrip"></i>
      <div class="side-item"><svg><use href="#vec-add"/></svg></div>
      <div class="side-item"><svg><use href="#rast-add"/></svg></div>
      <div class="side-item"><svg><use href="#mesh-add"/></svg></div>
      <div class="side-item"><svg><use href="#comma-add"/></svg></div>
      <div class="side-item"><svg><use href="#feather-add"/></svg></div>
      <div class="side-item"><svg><use href="#virt-add"/></svg></div>
      <div class="side-item"><svg><use href="#pg-add"/></svg><i class="dd"></i></div>
      <div class="side-item"><svg><use href="#dots-add"/></svg><i class="dd"></i></div>
      <div class="side-item"><svg><use href="#globe-add"/></svg></div>
      <div class="side-item"><svg><use href="#wfs-add"/></svg><i class="dd"></i></div>
      <div class="side-item"><svg><use href="#vec-new"/></svg><i class="dd"></i></div>
      <div class="side-item mid"><svg><use href="#table-add"/></svg></div>
    </aside>

    <section class="dock dock-left">
      <h2>Layer</h2>
      <div class="minibar">
        <svg><use href="#brush"/></svg><svg><use href="#clip-add"/></svg><svg><use href="#eye"/></svg><svg><use href="#funnel"/></svg><svg><use href="#eps"/></svg><i class="dd"></i><svg><use href="#expand"/></svg><svg><use href="#collapse"/></svg><svg><use href="#remove"/></svg>
      </div>
      <div class="treebox">
        <ul class="tree">
          <li class="l0"><i class="tw open"></i><label><input type="checkbox" checked><svg><use href="#clip"/></svg>Gebiet_und_Wege</label></li>
          <li class="l1"><i class="tw open"></i><label><input type="checkbox" checked><svg><use href="#clip"/></svg>Strasse</label></li>
          <li class="l2"><i class="tw none"></i><label><input type="checkbox" checked><i class="swatch black"></i><b>Strasse tracks</b></label></li>
          <li class="l1"><i class="tw"></i><label><input type="checkbox" checked><svg><use href="#clip"/></svg>Rundweg</label></li>
          <li class="l1"><i class="tw"></i><label><input type="checkbox" checked><svg><use href="#clip"/></svg>NSG</label></li>
          <li class="l1"><i class="tw"></i><label><input type="checkbox" checked><svg><use href="#clip"/></svg>Bannwald_alt</label></li>
          <li class="l0"><i class="tw open"></i><label><input type="checkbox" checked><svg><use href="#clip"/></svg>Pflanzengesellschaften</label></li>
          <li class="l1"><i class="tw"></i><label><input type="checkbox" checked><svg><use href="#clip"/></svg>Polytrichum_commune</label></li>
          <li class="l1"><i class="tw"></i><label><input type="checkbox" checked><svg><use href="#clip"/></svg>Sphagnetum_magellanici</label></li>
          <li class="l1"><i class="tw"></i><label><input type="checkbox" checked><svg><use href="#clip"/></svg>Eriophorum_vaginatum</label></li>
          <li class="l1"><i class="tw"></i><label><input type="checkbox" checked><svg><use href="#clip"/></svg>Eriophorum_vaginatum</label></li>
          <li class="l1"><i class="tw"></i><label><input type="checkbox" checked><svg><use href="#clip"/></svg>Eriophorum_vaginatum</label></li>
          <li class="l1"><i class="tw"></i><label><input type="checkbox" checked><svg><use href="#clip"/></svg>Vaccinio_Abietetum</label></li>
          <li class="l1"><i class="tw"></i><label><input type="checkbox" checked><svg><use href="#clip"/></svg>Vaccinio_uliginosi_Pinetum</label></li>
          <li class="l1"><i class="tw"></i><label><input type="checkbox" checked><svg><use href="#clip"/></svg>Vaccinio_uliginosi_Pinetum</label></li>
          <li class="l1"><i class="tw"></i><label><input type="checkbox" checked><svg><use href="#clip"/></svg>Vaccinio_uliginosi_Pinetum</label></li>
          <li class="l1"><i class="tw open"></i><label><input type="checkbox" checked><svg><use href="#clip"/></svg>Vaccinio_uliginosi_Pinetum</label></li>
          <li class="l2"><i class="tw none"></i><label class="current"><input type="checkbox" checked><i class="swatch red"></i><b><u>Vaccinio_uliginosi_Pinetum</u></b></label></li>
          <li class="l1"><i class="tw"></i><label><input type="checkbox" checked><svg><use href="#clip"/></svg>Vaccinio_uliginosi_Pinetum</label></li>
          <li class="l1"><i class="tw"></i><label><input type="checkbox" checked><svg><use href="#clip"/></svg>Vaccinio_uliginosi_Pinetum</label></li>
          <li class="l0"><i class="tw"></i><label><input type="checkbox"><svg><use href="#clip"/></svg>Biotope</label></li>
          <li class="l0"><i class="tw open"></i><label><input type="checkbox" checked><svg><use href="#rast"/></svg><b>OpenStreetMap Standard</b></label></li>
        </ul>
        <div class="hscroll"><i class="sl"></i><i class="thumb"></i><i class="sr"></i></div>
      </div>
      <h2 class="second">Koordinatenaufnahme</h2>
      <div class="capture">
        <button type="button" class="sq" aria-label="KBS"><svg><use href="#crs"/></svg></button>
        <input type="text" aria-label="Koordinate KBS">
        <svg class="gridico"><use href="#gridb"/></svg>
        <input type="text" aria-label="Koordinate Karte">
        <button type="button" class="sq" aria-label="Mausverfolgung"><svg><use href="#mouse"/></svg></button>
        <button type="button" class="btn">In Zwischenablage kopieren</button>
        <span></span>
        <button type="button" class="btn"><svg><use href="#cross"/></svg>Aufnahme starten</button>
      </div>
    </section>

    <section class="map">
      <svg viewBox="0 0 940 811" preserveAspectRatio="xMinYMin slice">
        <defs>
          <pattern id="wood" width="96" height="78" patternUnits="userSpaceOnUse">
            <use href="#tree" x="8" y="12" width="11" height="11"/>
            <use href="#tree" x="40" y="2" width="11" height="11"/>
            <use href="#tree" x="74" y="22" width="11" height="11"/>
            <use href="#tree" x="26" y="40" width="11" height="11"/>
            <use href="#tree" x="58" y="52" width="11" height="11"/>
            <use href="#tree" x="4" y="62" width="11" height="11"/>
          </pattern>
        </defs>
        <rect width="940" height="811" fill="#add19e"/>
        <rect width="940" height="811" fill="url(#wood)"/>
        <path d="M0 803L74 778 110 764H258L274 811H0z" fill="#cbebb0"/>
        <path d="M274 811l127-9h85l86 4 28-1 120 6z" fill="#fff"/>
        <path d="M0 724l34-30M806 58l44 18 50 24 40 10" fill="none" stroke="#b5d9ea" stroke-width="3"/>
        <path d="M372 770l30 28" stroke="#e9b9a8" stroke-width="3" stroke-dasharray="3 3"/>
        <path d="M580 803l60 3 70 6" fill="none" stroke="#5a70b8" stroke-width="2" stroke-dasharray="4 3"/>
        <path d="M0 803l74-25 56-22" fill="none" stroke="#0b5a10" stroke-width="7"/>
        <path d="M254 762l20 47 127-10h85l86 4 92-46" fill="none" stroke="#0b5a10" stroke-width="7"/>
        <path d="M670 0l33 3 115 52 98 34 40 10" fill="none" stroke="#0b5a10" stroke-width="7"/>
        <path d="M660 6l22 34 30 48 60 100" fill="none" stroke="#000" stroke-width="7"/>
        <path d="M690 132l60 24 60 30" fill="none" stroke="#333" stroke-width="3"/>
        <text x="707" y="21" transform="rotate(21 707 21)" font-family="Open Sans" font-size="9" fill="#6fa6c8" stroke="#cfe6e6" stroke-width="1" paint-order="stroke">Reichenbach</text>
        <text x="548" y="809" font-family="Open Sans" font-size="9" fill="#555">K 4335</text>
      </svg>
    </section>

    <section class="dock dock-right">
      <h2>Browser
        <svg width="18" height="18" viewBox="0 0 18 18"><path d="M6 7V2h10v8h-4M2 8h10v8H2z" fill="none" stroke="#333" stroke-width="2"/><path d="M5 2.500h12M1 8.500h12" stroke="#333" stroke-width="3"/></svg>
        <svg width="18" height="18" viewBox="0 0 18 18"><path d="M2.500 2.500l13 13M15.500 2.500l-13 13" stroke="#333" stroke-width="4"/></svg>
      </h2>
      <div class="minibar">
        <svg><use href="#addlay"/></svg><svg><use href="#refresh"/></svg><svg><use href="#funnel"/></svg><svg><use href="#collapse"/></svg><svg><use href="#info"/></svg>
      </div>
      <div class="treebox">
        <div class="treecols">
        <ul class="tree browse">
          <li class="l0"><i class="tw open"></i><svg><use href="#fold-open"/></svg>_QGIS für Pilzfreunde</li>
          <li class="l1"><i class="tw"></i><svg><use href="#fold"/></svg>Beide Biotope - Docs</li>
          <li class="l1"><i class="tw"></i><svg><use href="#fold"/></svg>Bilder</li>
          <li class="l1"><i class="tw"></i><svg><use href="#fold"/></svg>csv-Importe</li>
          <li class="l1"><i class="tw"></i><svg><use href="#fold"/></svg>Forst - WMS-Dienste</li>
          <li class="l1"><i class="tw"></i><svg><use href="#fold"/></svg>Forums-Beiträge</li>
          <li class="l1"><i class="tw"></i><svg><use href="#fold"/></svg>Fotos</li>
          <li class="l1"><i class="tw"></i><svg><use href="#fold"/></svg>geopackage</li>
          <li class="l1"><i class="tw"></i><svg><use href="#fold"/></svg>geotiff_export</li>
          <li class="l1"><i class="tw"></i><svg><use href="#fold"/></svg>gpx-Exporte</li>
          <li class="l1"><i class="tw"></i><svg><use href="#fold"/></svg>gpx-Importe</li>
          <li class="l1"><i class="tw"></i><svg><use href="#fold"/></svg>JPG-Import</li>
          <li class="l1"><i class="tw"></i><svg><use href="#fold"/></svg>kml-Exporte</li>
          <li class="l1"><i class="tw"></i><svg><use href="#fold"/></svg>models</li>
          <li class="l1"><i class="tw"></i><svg><use href="#fold"/></svg>nicht georeferenzierte Karten, Scans, Screenshots</li>
          <li class="l1"><i class="tw"></i><svg><use href="#fold"/></svg>Offline-Karten</li>
          <li class="l1"><i class="tw"></i><svg><use href="#fold"/></svg>planlauf_terrain</li>
          <li class="l1"><i class="tw"></i><svg><use href="#fold"/></svg>plugins</li>
          <li class="l1"><i class="tw"></i><svg><use href="#fold-link"/></svg>QGIS + LIDAR - tipps &amp; Tricks.lnk</li>
          <li class="l1"><i class="tw"></i><svg><use href="#fold"/></svg>Rechtliches</li>
          <li class="l1"><i class="tw open"></i><span class="current"><svg><use href="#fold-sel"/></svg>Shape-Exporte</span></li>
          <li class="l2"><i class="tw open"></i><svg><use href="#fold-open"/></svg>WT</li>
          <li class="l3"><i class="tw"></i><svg><use href="#fold"/></svg>PflGes</li>
          <li class="l3"><i class="tw"></i><svg><use href="#zip"/></svg>Heidew_1, Moorw_1.zip</li>
          <li class="l3"><i class="tw none"></i><svg><use href="#shp"/></svg>Heidewald.shp</li>
          <li class="l3"><i class="tw none"></i><svg><use href="#shp"/></svg>Heidewald_1.shp</li>
          <li class="l3"><i class="tw none"></i><svg><use href="#shp"/></svg>Misse.shp</li>
          <li class="l3"><i class="tw none"></i><svg><use href="#shp"/></svg>Moorkern1.shp</li>
          <li class="l3"><i class="tw none"></i><svg><use href="#shp"/></svg>Moorkern2.shp</li>
          <li class="l3"><i class="tw none"></i><svg><use href="#shp"/></svg>Moorkern3.shp</li>
          <li class="l3"><i class="tw none"></i><svg><use href="#shp"/></svg>Moorkern4.shp</li>
        </ul>
        <div class="vscroll browse-scroll"><i class="su"></i><i class="thumb marks"></i><i class="sd"></i></div>
        </div>
        <div class="hscroll browse-h"><i class="sl"></i><i class="thumb marks"></i><i class="sr"></i></div>
      </div>
    </section>
  </main>

  <footer class="statusbar">
    <label class="locator"><svg class="ico16"><use href="#lens"/></svg><input type="text" placeholder="Zu suchender Typ (Strg+K)" aria-label="Suche"></label>
    <label for="koord" class="push">Koordinate</label>
    <input type="text" id="koord" class="field w-coord" value="961672,6229846">
    <svg class="ico20"><use href="#mouse"/></svg>
    <label for="scale" class="lead-lg">Maßstab</label>
    <span class="combo flat w-scale"><select id="scale"><option>1:6314</option></select></span>
    <svg class="ico20 lead"><use href="#lock"/></svg>
    <label for="mag">Vergrößerung</label>
    <span class="spin"><input type="text" id="mag" value="100%"><i></i></span>
    <label for="rot" class="lead">Drehung</label>
    <span class="spin"><input type="text" id="rot" value="0,0 °"><i></i></span>
    <label class="check"><input type="checkbox" checked>Zeichnen</label>
    <svg class="ico20 lead-lg"><use href="#globe-wire"/></svg>
    <span>EPSG:3857</span>
    <svg class="ico20 lead-lg"><use href="#bubble"/></svg>
    <svg class="ico24 lead"><use href="#puzzle"/></svg>
  </footer>
  <div class="desk"></div>

  <!-- Vektorlayer speichern als -->
  <section class="window win-export">
    <div class="win-title">
      <svg class="ico20"><use href="#logo"/></svg>
      <span>Vektorlayer speichern als...</span>
      <button type="button" class="close" aria-label="Schließen"><svg width="16" height="16"><use href="#xglyph"/></svg></button>
    </div>
    <form class="client">
      <div class="fields">
        <label for="fmt">Format</label>
        <span class="combo full"><select id="fmt"><option>ESRI-Shapedatei</option></select></span>
        <label for="fname">Dateiname</label>
        <input type="text" id="fname">
        <button type="button" class="btn small">…</button>
        <label for="lname">Layername</label>
        <input type="text" id="lname" class="full" disabled>
        <label for="crs-sel">KBS</label>
        <span class="combo tall"><select id="crs-sel"><option>EPSG:4326 - WGS 84</option></select></span>
        <button type="button" class="btn small tall" aria-label="KBS wählen"><svg><use href="#globe-edit"/></svg></button>
      </div>
      <div class="scrollarea">
        <div class="options">
          <div class="enc"><label for="enc">Kodierung</label><span class="combo"><select id="enc"><option>UTF-8</option></select></span></div>
          <label class="check off"><input type="checkbox" disabled>Nur gewählte Objekt speichern</label>
          <h3 class="closed">Felder zum Export und deren Exportoptionen</h3>
          <h3 class="closed">Geometrie</h3>
          <h3><label><input type="checkbox">Ausdehnung (aktuell: Layer)</label><i class="rule"></i></h3>
          <div class="box extent">
            <div class="line mid"><label for="nord">Nord</label><input type="text" id="nord" disabled></div>
            <div class="line"><label for="west">West</label><input type="text" id="west" value="8.642715057" disabled></div>
            <div class="line mid"><label for="sued">Süd</label><input type="text" id="sued" disabled></div>
            <button type="button" class="btn" disabled>Ausdehnung des aktuellen Layers</button>
          </div>
          <h3>Layeroptionen<i class="rule"></i></h3>
          <div class="box pairs">
            <label for="resize">RESIZE</label><span class="combo"><select id="resize"><option>NO</option></select></span>
            <label for="shpt">SHPT</label><span class="combo"><select id="shpt"><option></option></select></span>
          </div>
          <h3>Benutzeroptionen<i class="rule"></i></h3>
          <div class="box pairs areas">
            <label for="dsrc">Datenquelle</label><textarea id="dsrc"></textarea>
            <label for="lopt">Layer</label><textarea id="lopt"></textarea>
          </div>
        </div>
        <div class="vscroll opt-scroll"><i class="su"></i><i class="thumb"></i></div>
      </div>
    </form>
  </section>

  <!-- Layer speichern als -->
  <section class="window win-save">
    <div class="win-title">
      <svg class="ico20"><use href="#logo"/></svg>
      <span>Layer speichern als</span>
      <button type="button" class="close red" aria-label="Schließen"><svg width="16" height="16"><use href="#xglyph"/></svg></button>
    </div>
    <div class="navrow">
      <button type="button" class="round" aria-label="Zurück"><svg viewBox="0 0 20 20"><path d="M1 10l8-8v5h10v6H9v5z" fill="#e9e9e9" stroke="#aaa" stroke-width=".8"/></svg></button>
      <button type="button" class="round" aria-label="Vorwärts"><svg viewBox="0 0 20 20"><path d="M19 10l-8-8v5H1v6h10v5z" fill="#e9e9e9" stroke="#aaa" stroke-width=".8"/></svg></button>
      <i class="dd light"></i>
      <div class="address">
        <svg class="ico20"><use href="#wfold"/></svg><span class="chev">«</span>
        <span>Science</span><i class="tri"></i><span>_QGIS für Pilzfreunde</span><i class="tri"></i><span>Shape-Exporte</span><i class="tri"></i><span>WT</span><i class="tri"></i>
        <i class="dd"></i>
        <button type="button" aria-label="Aktualisieren"><svg width="18" height="16"><use href="#swap"/></svg></button>
      </div>
      <label class="find"><input type="text" placeholder="WT durchsuchen" aria-label="WT durchsuchen"><svg class="ico16"><use href="#lens-b"/></svg></label>
    </div>
    <div class="client">
      <div class="cmdbar">
        <button type="button">Organisieren<i class="dd"></i></button>
        <button type="button">Neuer Ordner</button>
        <svg class="ico20"><use href="#views"/></svg><i class="dd"></i>
        <span class="qmark">?</span>
      </div>
      <div class="panes">
        <ul class="folders">
          <li><svg><use href="#wfold"/></svg>geopackage</li>
          <li><svg><use href="#wfold"/></svg>geotiff_export</li>
          <li><svg><use href="#wfold"/></svg>gpx-Exporte</li>
          <li><svg><use href="#wfold"/></svg>gpx-Importe</li>
          <li><svg><use href="#wfold"/></svg>JPG-Import</li>
          <li><svg><use href="#wfold"/></svg>kml-Exporte</li>
          <li><svg><use href="#wfold"/></svg>models</li>
          <li><svg><use href="#wfold"/></svg>nicht georeferenzierte Karten, Scans, Screenshots</li>
          <li><svg><use href="#wfold"/></svg>Offline-Karten</li>
          <li><svg><use href="#wfold"/></svg>planlauf_terrain</li>
          <li><svg><use href="#wfold"/></svg>plugins</li>
          <li><svg><use href="#wfold"/></svg>Rechtliches</li>
          <li><svg><use href="#wfold"/></svg>Shape-Exporte</li>
          <li class="in1 sel"><svg><use href="#wfold"/></svg>WT</li>
          <li class="in2"><svg><use href="#wfold"/></svg>PflGes</li>
          <li class="in2"><svg><use href="#file"/></svg>Heidew_1, Moorw_1.zip</li>
        </ul>
        <div class="vscroll folder-scroll"><i class="su"></i><i class="thumb marks"></i><i class="sd"></i></div>
        <div class="files">
          <table>
            <thead><tr><th class="name">Name<i class="sorted"></i></th><th class="date">Änderungsdatum</th><th class="type">Typ</th></tr></thead>
            <tbody>
              <tr><td><svg><use href="#wfold"/></svg>PflGes</td><td>25.12.2019 14:40</td><td>Dateiordner</td></tr>
              <tr><td><svg><use href="#file"/></svg>Heidewald.shp</td><td>11.12.2019 13:58</td><td>SHP-Datei</td></tr>
              <tr><td><svg><use href="#file"/></svg>Heidewald_1.shp</td><td>17.12.2019 15:16</td><td>SHP-Datei</td></tr>
              <tr><td><svg><use href="#file"/></svg>Misse.shp</td><td>11.12.2019 13:41</td><td>SHP-Datei</td></tr>
              <tr><td><svg><use href="#file"/></svg>Moorkern1.shp</td><td>11.12.2019 13:46</td><td>SHP-Datei</td></tr>
              <tr><td><svg><use href="#file"/></svg>Moorkern2.shp</td><td>11.12.2019 13:48</td><td>SHP-Datei</td></tr>
              <tr><td><svg><use href="#file"/></svg>Moorkern3.shp</td><td>11.12.2019 13:48</td><td>SHP-Datei</td></tr>
              <tr><td><svg><use href="#file"/></svg>Moorkern4.shp</td><td>11.12.2019 13:49</td><td>SHP-Datei</td></tr>
              <tr><td><svg><use href="#file"/></svg>Moorwald.shp</td><td>11.12.2019 13:49</td><td>SHP-Datei</td></tr>
              <tr><td><svg><use href="#file"/></svg>Moorwald_1.shp</td><td>17.12.2019 15:17</td><td>SHP-Datei</td></tr>
              <tr><td><svg><use href="#file"/></svg>Tannenwald.shp</td><td>11.12.2019 13:50</td><td>SHP-Datei</td></tr>
            </tbody>
          </table>
          <div class="hscroll files-h"><i class="sl"></i><i class="thumb marks"></i><i class="sr"></i></div>
        </div>
      </div>
      <form class="saveform">
        <label for="sname">Dateiname:</label>
        <span class="combo field-combo"><input type="text" id="sname" value="Vaccinio_uliginosi_Pinetum_sylvestris_Dickung"></span>
        <label for="stype">Dateityp:</label>
        <span class="combo"><select id="stype"><option>ESRI-Shapedatei (*.shp *.SHP)</option></select></span>
        <div class="actions">
          <button type="button" class="hide"><i></i>Ordner ausblenden</button>
          <button type="button" class="btn primary">Speichern</button>
          <button type="button" class="btn cancel">Abbrechen</button>
        </div>
      </form>
      <svg class="sizer" viewBox="0 0 12 12"><path d="M8 0h3v3H8zM4 4h3v3H4zM8 4h3v3H8zM0 8h3v3H0zM4 8h3v3H4zM8 8h3v3H8z" fill="#c2c2c2"/></svg>
    </div>
  </section>

  <!-- annotations on top of the windows -->
  <div class="ring ring-format"></div>
  <div class="ring ring-browse"></div>
  <svg class="arrow-name" viewBox="0 0 80 14"><path d="M12 7h68" stroke="#f00000" stroke-width="2"/><path d="M0 7l20-6-3 6 3 6z" fill="#f00000"/></svg>
  <svg class="arrow-save" viewBox="0 0 14 56"><path d="M7 0v44" stroke="#f00000" stroke-width="2"/><path d="M7 56L1 34l6 3 6-3z" fill="#f00000"/></svg>
  <div class="note n1">1.</div>
  <div class="note n2">2.</div>
  <div class="note n3">3.</div>
  <div class="note n4">4.</div>
  <div class="note caption">Bild 17</div>
  <svg class="cursor" viewBox="0 0 14 20"><path d="M1 1v15l4-3.500 3 6 3-1.500-3-6h5z" fill="#fff" stroke="#222"/></svg>

</body>
</html>
```
FILE: styles.css
```css
* {
  box-sizing: border-box;
}
body {
  margin: 0;
  height: 100vh;
  overflow: hidden;
  display: flex;
  flex-direction: column;
  background: #efefef;
  color: #111;
  font-family: "Open Sans", "Noto Sans", sans-serif;
  font-size: 14px;
  line-height: 20px;
  white-space: nowrap;
}
button, input, select, textarea {
  font: inherit;
  color: inherit;
  margin: 0;
}
button {
  padding: 0;
  border: none;
  background: none;
}
ul {
  list-style: none;
  margin: 0;
  padding: 0;
}
svg {
  flex: none;
}
.sprite {
  position: absolute;
  width: 0;
  height: 0;
}
.ico16 { width: 16px; height: 16px; }
.ico20 { width: 20px; height: 20px; }
.ico24 { width: 24px; height: 20px; }

/* small triangles */
.dd {
  flex: none;
  width: 0;
  height: 0;
  border: 5px solid transparent;
  border-top-color: #000;
  border-bottom: none;
}
.dd.gray { border-top-color: #777; margin: 0 3px 0 2px; }
.dd.light { border-top-color: #c9c9c9; }

/* main window frame */
.titlebar {
  flex: none;
  height: 27px;
  display: flex;
  align-items: center;
  gap: 5px;
  border-bottom: 1px solid #30303a;
  background: linear-gradient(rgba(0,0,0,.25), rgba(0,0,0,0) 30%, rgba(0,0,0,.06)),
    linear-gradient(90deg, #bdbdbf 0, #c9c9cb 210px, #62636c 262px, #8c8c96 290px, #85848f 355px, #9a6a6a 372px, #8a8591 395px, #80819a 750px, #9b9ba9 900px, #7d7e8c 1000px, #4e4e58 1075px, #94939e 1120px, #6f6f72 1170px, #8b8b8c 1400px, #8d8d90 1550px, #868aa0 1650px, #8f94a6 1780px, #6a6b78 1920px);
}
.winbtns {
  margin-left: auto;
  align-self: flex-start;
  display: flex;
  height: 23px;
  margin-right: 3px;
  border: 1px solid #55555f;
  border-top: none;
  border-radius: 0 0 5px 5px;
  background: rgba(255,255,255,.35);
}
.winbtns button {
  width: 34px;
  display: flex;
  align-items: center;
  justify-content: center;
  border-right: 1px solid #6a6a74;
}
.winbtns .wide { width: 59px; border: none; }

.menubar {
  flex: none;
  height: 26px;
  display: flex;
  gap: 16px;
  padding: 4px 8px 0;
  color: #9b9b9b;
  border-bottom: 1px solid #b5b5b5;
  background: linear-gradient(#fdfdfe 0, #f0f2fa 9px, #d4daee 10px, #e3e8f7 100%);
}

.toolbar {
  flex: none;
  height: 34px;
  display: flex;
  border-bottom: 1px solid #b9b9b9;
  border-top: 1px solid #fafafa;
}
.group {
  display: flex;
  align-items: center;
  padding-right: 2px;
  border-right: 1px solid #b9b9b9;
}
.group.last { border: none; }
.toolbar button {
  flex: none;
  width: 31px;
  height: 29px;
  display: flex;
  align-items: center;
  justify-content: center;
}
.toolbar button svg { width: 24px; height: 24px; }
.toolbar .pressed {
  border: 1px solid #555;
  border-radius: 3px;
  background: #dedede;
  box-shadow: inset 0 1px 3px rgba(0,0,0,.3);
}
.toolbar .word {
  flex-direction: column;
  align-items: center;
  font-size: 10px;
  line-height: 12px;
}
.toolbar .word svg { width: 11px; height: 11px; align-self: flex-end; }
.toolbar .dd { margin: 0 3px 0 2px; }
.grip {
  flex: none;
  width: 3px;
  height: 27px;
  margin: 0 4px;
  background: radial-gradient(circle, #aaa 1px, transparent 2px) 0 0 / 3px 4px;
}
.vsep {
  width: 1px;
  height: 26px;
  margin: 0 3px;
  background: #c4c4c4;
}
.filler { width: 923px; }

/* workspace */
.workspace {
  flex: 1;
  min-height: 0;
  display: flex;
}
.sidebar {
  flex: none;
  width: 50px;
  padding-top: 3px;
  border-right: 1px solid #aaa;
  border-bottom: 1px solid #aaa;
}
.hgrip {
  display: block;
  height: 3px;
  margin: 0 4px 5px;
  background: radial-gradient(circle, #aaa 1px, transparent 2px) 0 0 / 4px 3px;
}
.side-item {
  height: 30px;
  display: flex;
  align-items: center;
  gap: 5px;
  padding-left: 5px;
}
.side-item svg { width: 25px; height: 25px; }
.side-item.mid { padding-left: 12px; }

.dock {
  display: flex;
  flex-direction: column;
  min-width: 0;
  min-height: 0;
}
.dock-left { flex: 0 1 473px; }
.dock-right { flex: 0 0 439px; }
.dock h2 {
  flex: none;
  margin: 1px 0 0;
  height: 31px;
  display: flex;
  align-items: center;
  gap: 7px;
  padding: 2px 5px 0 4px;
  font-size: 14px;
  font-weight: normal;
  background: #dadada;
  border: 1px solid #b3b3b3;
}
.dock h2 svg:first-of-type { margin-left: auto; }
.dock h2.second { margin-top: 6px; }
.minibar {
  flex: none;
  height: 28px;
  display: flex;
  align-items: center;
  gap: 7px;
  padding: 2px 0 0 5px;
}
.minibar svg { width: 16px; height: 16px; }
.treebox {
  flex: 1;
  min-height: 0;
  display: flex;
  flex-direction: column;
  border: 1px solid #777;
  background: #fff;
}
.tree {
  flex: 1;
  min-width: 0;
  min-height: 0;
  overflow: hidden;
  padding-top: 1px;
  --base: 5px;
}
.tree.browse { --base: 56px; }
.tree li {
  height: 24px;
  display: flex;
  align-items: center;
  padding-left: var(--base);
}
.tree .l1 { padding-left: calc(var(--base) + 25px); }
.tree .l2 { padding-left: calc(var(--base) + 50px); }
.tree .l3 { padding-left: calc(var(--base) + 75px); }
.tree label,
.tree .current {
  flex: 1;
  display: flex;
  align-items: center;
  height: 24px;
}
.tree svg { width: 18px; height: 18px; margin-right: 7px; }
.tree input { margin-right: 7px; }
.current {
  background: linear-gradient(#fafafa, #e6e6e6);
  box-shadow: 0 0 0 1px #d9d9d9;
  border-radius: 3px;
}
.tw {
  flex: none;
  width: 6px;
  height: 10px;
  margin: 0 10px 0 6px;
  background: #8b8b8b;
  clip-path: polygon(0 0, 100% 50%, 0 100%, 0 0, 1px 2px, 1px 8px, 4px 5px, 1px 2px);
}
.tw.open {
  width: 8px;
  height: 8px;
  margin: 0 9px 0 5px;
  background: #333;
  clip-path: polygon(100% 0, 100% 100%, 0 100%);
}
.tw.none { background: none; }
.swatch {
  width: 19px;
  height: 8px;
  margin-right: 6px;
  background: #000;
}
.swatch.red { height: 4px; background: #a8324a; }

input[type="checkbox"] {
  flex: none;
  appearance: none;
  position: relative;
  width: 16px;
  height: 16px;
  border: 1px solid #8f8f8f;
  background: linear-gradient(135deg, #ccd2da, #fff);
  box-shadow: inset 0 0 0 1px #f4f4f4;
}
input[type="checkbox"]:checked::after {
  content: "";
  position: absolute;
  left: 4px;
  top: 0;
  width: 6px;
  height: 11px;
  border: solid #41569c;
  border-width: 0 2px 2px 0;
  transform: rotate(40deg);
}
input[type="checkbox"]:disabled {
  border-color: #bcbcbc;
  background: #f6f6f6;
}

/* scrollbars */
.hscroll {
  flex: none;
  height: 20px;
  display: flex;
  align-items: center;
  background: #ececec;
}
.vscroll {
  flex: none;
  width: 19px;
  display: flex;
  flex-direction: column;
  align-items: center;
  background: #ececec;
}
.sl, .sr, .su, .sd {
  flex: none;
  border: 5px solid transparent;
}
.sl { border-right-color: #444; border-left: none; margin: 0 8px; }
.sr { border-left-color: #444; border-right: none; margin: 0 7px 0 auto; }
.su { border-bottom-color: #444; border-top: none; margin: 8px 0; }
.sd { border-top-color: #666; border-bottom: none; margin: auto 0 8px; }
.thumb {
  display: flex;
  align-items: center;
  justify-content: center;
  border: 1px solid #8e8e8e;
  border-radius: 2px;
}
.hscroll .thumb {
  flex: 1;
  height: 19px;
  background: linear-gradient(#f3f3f3, #e0e0e0 48%, #cbcbcb 50%, #dcdcdc);
}
.vscroll .thumb {
  width: 17px;
  background: linear-gradient(90deg, #f3f3f3, #e0e0e0 48%, #cbcbcb 50%, #dcdcdc);
}
.marks::after {
  content: "";
  width: 10px;
  height: 9px;
  background: repeating-linear-gradient(90deg, #777 0 1px, transparent 1px 4px);
}
.vscroll .marks::after {
  background: repeating-linear-gradient(#777 0 1px, transparent 1px 4px);
}
.treecols {
  flex: 1;
  min-height: 0;
  display: flex;
}
.browse-scroll .thumb { height: 198px; margin-top: 81px; }
.browse-h { margin-right: 19px; }
.browse-h .thumb { flex: 0 0 335px; }

.capture {
  flex: none;
  height: 155px;
  display: grid;
  grid-template-columns: 43px 1fr;
  grid-template-rows: 23px 23px 27px 27px;
  align-content: start;
  gap: 8px 0;
  padding: 14px 6px 0 11px;
  font-family: "DejaVu Sans Condensed", "Noto Sans", sans-serif;
  font-size: 13px;
}
.capture input,
.field,
.spin {
  height: 22px;
  border: 1px solid #e0e0e0;
  border-top-color: #aaa;
  border-radius: 1px;
  background: #fff;
}
.sq {
  width: 25px;
  height: 24px;
  display: flex;
  align-items: center;
  justify-content: center;
  border: 1px solid #777;
  border-radius: 3px;
  background: linear-gradient(#f5f5f5, #dcdcdc);
}
.sq svg { width: 20px; height: 20px; }
.gridico { width: 21px; height: 21px; }
.btn {
  display: flex;
  align-items: center;
  justify-content: center;
  gap: 4px;
  border: 1px solid #707070;
  border-radius: 3px;
  background: linear-gradient(#f4f4f4, #e9e9e9 48%, #d9d9d9 50%, #cdcdcd);
  box-shadow: inset 0 0 0 1px rgba(255,255,255,.6);
}
.btn svg { width: 20px; height: 20px; }
.btn:disabled {
  color: #8a8a8a;
  border-color: #aaa;
  background: #f3f3f3;
}

.map {
  flex: 1;
  min-width: 0;
  margin: 0 6px 0 11px;
  border: 1px solid #777;
}
.map svg {
  display: block;
  width: 100%;
  height: 100%;
}

.statusbar {
  flex: none;
  height: 32px;
  display: flex;
  align-items: center;
  gap: 5px;
  padding: 0 2px 0 4px;
  font-family: "DejaVu Sans Condensed", "Noto Sans", sans-serif;
  font-size: 13px;
}
.locator {
  width: 278px;
  height: 22px;
  display: flex;
  align-items: center;
  gap: 7px;
  padding-left: 6px;
  border: 1px solid #ddd;
  border-top-color: #aaa;
  background: #fff;
}
.locator input {
  flex: 1;
  min-width: 0;
  border: none;
  background: none;
  padding: 0;
}
.locator input::placeholder { color: #777; }
.push { margin-left: auto; }
.lead { margin-left: 6px; }
.lead-lg { margin-left: 12px; }
.w-coord { width: 109px; padding: 0 0 0 5px; }
.w-scale { width: 89px; }
.spin {
  width: 85px;
  display: flex;
  align-items: center;
}
.spin input {
  flex: 1;
  min-width: 0;
  border: none;
  padding: 0 0 0 2px;
  background: none;
}
.spin i {
  width: 13px;
  height: 18px;
  margin-right: 1px;
  border: 1px solid #bbb;
  background: linear-gradient(#bbb, #bbb) 0 50% / 100% 1px no-repeat, #f4f4f4;
  position: relative;
}
.spin i::before,
.spin i::after {
  content: "";
  position: absolute;
  left: 2px;
  border: 4px solid transparent;
}
.spin i::before { top: 2px; border-bottom-color: #51639c; border-top: none; }
.spin i::after { bottom: 2px; border-top-color: #51639c; border-bottom: none; }
.check {
  display: flex;
  align-items: center;
  gap: 7px;
}
.desk {
  flex: none;
  height: 2px;
  background: #4c4a58;
}

/* combo boxes */
.combo {
  position: relative;
  display: block;
  height: 22px;
}
.combo select,
.combo input {
  appearance: none;
  width: 100%;
  height: 100%;
  padding: 0 24px 0 3px;
  border: 1px solid #707070;
  border-radius: 3px;
  background: linear-gradient(#f3f3f3, #ebebeb 48%, #dcdcdc 50%, #cfcfcf);
  box-shadow: inset 0 0 0 1px rgba(255,255,255,.5);
}
.combo::after {
  content: "";
  position: absolute;
  right: 6px;
  top: calc(50% - 3px);
  border: 5px solid transparent;
  border-top: 6px solid #000;
  border-bottom: none;
}
.combo.flat select {
  background: #fff;
  border-color: #ddd;
  border-top-color: #aaa;
  border-radius: 1px;
}

/* glass windows */
.window {
  position: absolute;
  border: 1px solid #333;
  border-radius: 7px;
  padding: 0 7px 7px;
  box-shadow: inset 0 0 0 1px rgba(255,255,255,.7), 0 2px 12px rgba(0,0,0,.7);
  backdrop-filter: blur(4px);
}
.win-title {
  display: flex;
  align-items: center;
  gap: 5px;
  font-size: 14px;
}
.win-title span {
  text-shadow: 0 0 8px #fff, 0 0 8px #fff;
}
.close {
  align-self: flex-start;
  margin-left: auto;
  width: 59px;
  height: 24px;
  display: flex;
  align-items: center;
  justify-content: center;
  border: 1px solid #8b8e96;
  border-top: none;
  border-radius: 0 0 5px 5px;
  background: rgba(255,255,255,.25);
}
.close.red {
  border-color: #4c1410;
  background: linear-gradient(#e3a598, #cf6a55 48%, #b8321a 50%, #d8644a);
  box-shadow: inset 0 0 0 1px rgba(255,255,255,.4);
}
.client {
  border: 1px solid #60646a;
  background: #f0f0f0;
}

.win-export {
  left: 274px;
  top: 39px;
  width: 935px;
  background: linear-gradient(rgba(200,205,218,.6), rgba(226,228,232,.6) 35px, rgba(240,240,240,.8));
  font-family: "DejaVu Sans Condensed", "Noto Sans", sans-serif;
  font-size: 13px;
}
.win-export .win-title {
  height: 34px;
  font-family: "Open Sans", "Noto Sans", sans-serif;
}
.win-export .client {
  height: 804px;
  padding: 25px 13px 47px;
}
.fields {
  display: grid;
  grid-template-columns: 70px 1fr 24px;
  grid-template-rows: 22px 21px 21px 25px;
  gap: 8px 0;
  align-items: center;
  padding: 0 11px 0 11px;
}
.fields .full { grid-column: 2 / 4; }
.fields input,
.line input,
.areas textarea {
  height: 21px;
  border: 1px solid #dedede;
  border-top-color: #aaa;
  border-radius: 2px;
  background: #fff;
}
.fields input:not(.full),
.combo.tall { margin-right: 9px; }
.fields .combo.tall,
.small.tall { height: 25px; }
.fields input:disabled,
.line input:disabled {
  border-color: #b5b5b5;
  background: #f0f0f0;
  color: #8a8a8a;
}
.small { height: 21px; }
.scrollarea {
  height: 600px;
  margin-top: 17px;
  display: flex;
  overflow: hidden;
  border: 1px solid #8a8a8a;
}
.options {
  flex: 1;
  min-width: 0;
  padding: 11px 13px 0 11px;
}
.enc {
  display: flex;
  align-items: center;
  justify-content: space-between;
  margin-bottom: 4px;
}
.enc .combo { width: 418px; }
.options .check { height: 25px; }
.off { color: #8a8a8a; }
.options h3 {
  margin: 0;
  height: 29px;
  display: flex;
  align-items: center;
  gap: 8px;
  font-size: 13px;
}
.options h3::before {
  content: "";
  flex: none;
  border: 6px solid transparent;
  border-top: 8px solid #333;
  border-bottom: none;
}
.options h3.closed::before {
  margin: 0 0 0 4px;
  border: 6px solid transparent;
  border-left: 8px solid #333;
  border-right: none;
}
.options h3 label {
  display: flex;
  align-items: center;
  gap: 9px;
}
.rule {
  flex: 1;
  height: 2px;
  border-top: 1px solid #d3d7db;
  border-bottom: 1px solid #fff;
}
.box {
  margin-bottom: 4px;
  padding: 4px 11px 9px;
  border: 1px solid #d3d7db;
  border-top: none;
  border-radius: 0 0 3px 3px;
}
.extent {
  display: flex;
  flex-direction: column;
  gap: 7px;
  padding-bottom: 21px;
  color: #8a8a8a;
}
.line {
  height: 22px;
  display: flex;
  align-items: center;
  gap: 7px;
}
.line input { flex: 1; height: 22px; padding: 0 2px; }
.line.mid { justify-content: center; }
.line.mid input { flex: none; width: 256px; }
.extent .btn {
  width: 198px;
  height: 26px;
  margin: 12px 0 0 12px;
}
.pairs {
  display: grid;
  grid-template-columns: 48px 1fr;
  gap: 7px 0;
  align-items: center;
}
.areas {
  grid-template-columns: 75px 1fr;
  align-items: start;
}
.areas textarea {
  height: 87px;
  resize: none;
}
.opt-scroll .thumb { height: 420px; }

.win-save {
  left: 608px;
  top: 272px;
  width: 955px;
  padding: 0 6px 7px;
  background: linear-gradient(115deg, rgba(150,150,150,.6), rgba(125,125,125,.65) 30%, rgba(140,140,140,.55) 60%, rgba(170,170,170,.6));
  box-shadow: inset 0 0 0 1px rgba(255,255,255,.6), 2px 4px 16px 3px rgba(0,0,0,.8);
}
.win-save .win-title { height: 34px; }
.navrow {
  height: 39px;
  display: flex;
  align-items: center;
  gap: 5px;
  padding: 0 2px 0 3px;
}
.round {
  flex: none;
  width: 32px;
  height: 32px;
  display: flex;
  align-items: center;
  justify-content: center;
  border: 2px solid #6e6e6e;
  border-radius: 50%;
  background: linear-gradient(#d6d6d6, #a9a9a9);
}
.round svg { width: 21px; height: 21px; }
.address,
.find {
  height: 27px;
  display: flex;
  align-items: center;
  border: 1px solid #666;
  background: rgba(240,240,240,.8);
  box-shadow: 0 0 0 1px rgba(255,255,255,.5);
}
.address {
  flex: 1;
  gap: 12px;
}
.chev { margin: -4px -2px 0 -4px; font-size: 16px; }
.tri {
  border: 5px solid transparent;
  border-left-color: #000;
  border-right: none;
}
.address .dd { margin: 0 -6px 0 auto; }
.address button {
  width: 30px;
  height: 25px;
  border-left: 1px solid #666;
  display: flex;
  align-items: center;
  justify-content: center;
}
.find {
  width: 203px;
  padding: 0 5px 0 9px;
}
.find input {
  flex: 1;
  min-width: 0;
  border: none;
  padding: 0;
  background: none;
}
.find input::placeholder { color: #777; font-style: italic; }

.win-save .client { position: relative; }
.cmdbar {
  height: 40px;
  display: flex;
  align-items: center;
  padding: 0 20px 0 21px;
  color: #1e395b;
  border-bottom: 1px solid #a0afc3;
  background: linear-gradient(#fafcff 0, #eef4fc 48%, #dbe7f6 50%, #dce8f7);
}
.cmdbar button {
  display: flex;
  align-items: center;
  gap: 6px;
  margin-right: 37px;
}
.cmdbar .dd { border-top-color: #1e395b; border-width: 5px 4px 0; }
.cmdbar > svg { margin: 0 13px 0 auto; }
.cmdbar > .dd { margin-right: 38px; }
.qmark {
  width: 18px;
  height: 18px;
  border-radius: 50%;
  background: #2b4fa8;
  box-shadow: 0 0 0 1px #8796bd;
  color: #fff;
  font-weight: bold;
  line-height: 18px;
  text-align: center;
}
.panes {
  height: 421px;
  display: flex;
  background: #fcfcfc;
}
.folders {
  flex: none;
  width: 404px;
  overflow: hidden;
}
.folders li {
  height: 27px;
  display: flex;
  align-items: center;
  gap: 7px;
  padding-left: 74px;
}
.folders .in1 { padding-left: 83px; }
.folders .in2 { padding-left: 94px; }
.folders .sel {
  border: 1px solid #d9d9d9;
  border-radius: 3px;
  background: linear-gradient(#fafafa, #e6e6e6);
}
.folders svg,
.files td svg {
  width: 18px;
  height: 20px;
}
.folder-scroll .thumb { height: 36px; margin-top: 79px; }
.files {
  flex: 1;
  min-width: 0;
  margin-left: 2px;
  padding-left: 2px;
  display: flex;
  flex-direction: column;
  overflow: hidden;
  border-left: 1px solid #d6e5f5;
}
.files table {
  table-layout: fixed;
  width: 620px;
  border-collapse: collapse;
}
.files th {
  height: 41px;
  padding: 0 8px 8px;
  text-align: left;
  font-weight: normal;
  color: #4c607a;
  border-left: 1px solid #e3e8ee;
}
.files .name {
  width: 339px;
  padding-left: 21px;
  border: none;
  position: relative;
}
.files .date { width: 150px; }
.sorted {
  position: absolute;
  left: 171px;
  top: 2px;
  border: 5px solid transparent;
  border-bottom-color: #7fa3b5;
  border-top: none;
}
.files td {
  height: 27px;
  padding: 0 8px;
  color: #6d6d6d;
}
.files td:first-child {
  display: flex;
  align-items: center;
  gap: 6px;
  padding-left: 24px;
  color: #111;
}
.files-h { margin-top: auto; }
.files-h .thumb { flex: 0 0 315px; }

.saveform {
  height: 150px;
  display: grid;
  grid-template-columns: 151px 1fr;
  grid-template-rows: 28px 28px;
  gap: 3px 5px;
  align-items: center;
  align-content: start;
  padding: 12px 7px 0 0;
}
.saveform > label { text-align: right; }
.saveform .combo { height: 28px; }
.field-combo input {
  padding-left: 6px;
  background: #fff;
  border-color: #4b7ba5 #b5d5ea #b5d5ea #4b7ba5;
}
.actions {
  grid-column: 1 / 3;
  display: flex;
  align-items: center;
  gap: 14px;
  margin-top: 26px;
  padding: 0 14px 0 11px;
}
.actions .btn { height: 33px; }
.actions .primary {
  width: 111px;
  border-color: #3c7fb1;
  background: linear-gradient(#e9f6fd, #d6eefb 48%, #bce4fa 50%, #a6d8f4);
}
.cancel { width: 98px; }
.hide {
  display: flex;
  align-items: center;
  gap: 4px;
  margin: 8px auto 0 0;
}
.hide i {
  width: 17px;
  height: 17px;
  display: flex;
  align-items: center;
  justify-content: center;
  border: 1px solid #8f9bc0;
  border-radius: 50%;
  background: linear-gradient(#fff, #cdd5e6);
}
.hide i::after {
  content: "";
  border: 4px solid transparent;
  border-bottom-color: #24386c;
  border-top: none;
}
.sizer {
  position: absolute;
  right: 2px;
  bottom: 2px;
  width: 12px;
  height: 12px;
}

/* annotations */
.note {
  position: absolute;
  width: 48px;
  height: 48px;
  display: flex;
  align-items: center;
  justify-content: center;
  padding-bottom: 3px;
  border: 2px solid #000;
  background: #ff0;
  font-family: "Liberation Sans", Arial, sans-serif;
  font-size: 18px;
  font-weight: bold;
}
.n1 { left: 506px; top: 89px; }
.n2 { left: 1074px; top: 111px; height: 43px; }
.n3 { left: 1171px; top: 814px; height: 44px; border-bottom-width: 3px; }
.n4 { left: 1339px; top: 808px; height: 45px; }
.caption {
  left: 965px;
  top: 937px;
  width: 127px;
  height: 45px;
  font-size: 20px;
}
.ring {
  position: absolute;
  border: 3px solid #e80000;
  border-radius: 50%;
}
.ring-format { left: 351px; top: 72px; width: 156px; height: 79px; }
.ring-browse { left: 1126px; top: 99px; width: 77px; height: 78px; }
.arrow-name { position: absolute; left: 1093px; top: 828px; width: 80px; height: 14px; }
.arrow-save { position: absolute; left: 1355px; top: 852px; width: 14px; height: 56px; }
.cursor { position: absolute; left: 1326px; top: 932px; width: 14px; height: 20px; }
```
